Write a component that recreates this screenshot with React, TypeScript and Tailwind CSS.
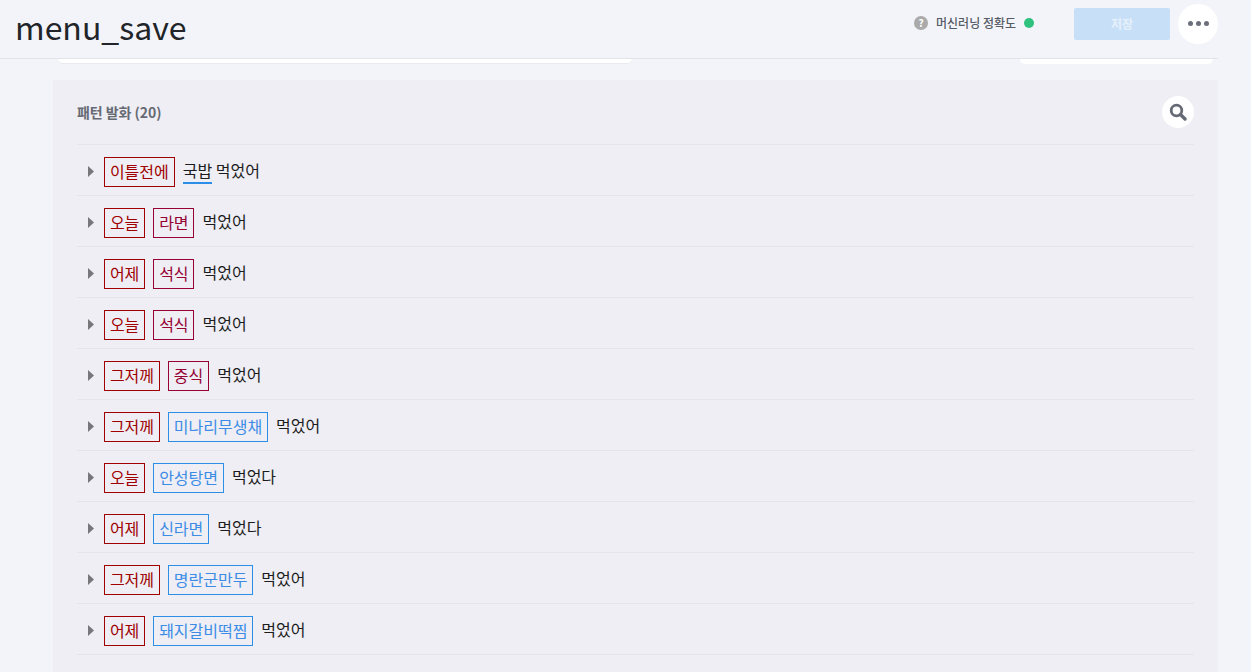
type Tag = { t: string; c: 'r' | 'p' | 'b' };
const rows: { tags: Tag[]; rest: string; plain?: string }[] = [
  { tags: [{ t: '이틀전에', c: 'r' }], rest: '먹었어', plain: '국밥' },
  { tags: [{ t: '오늘', c: 'r' }, { t: '라면', c: 'p' }], rest: '먹었어' },
  { tags: [{ t: '어제', c: 'r' }, { t: '석식', c: 'p' }], rest: '먹었어' },
  { tags: [{ t: '오늘', c: 'r' }, { t: '석식', c: 'p' }], rest: '먹었어' },
  { tags: [{ t: '그저께', c: 'r' }, { t: '중식', c: 'p' }], rest: '먹었어' },
  { tags: [{ t: '그저께', c: 'r' }, { t: '미나리무생채', c: 'b' }], rest: '먹었어' },
  { tags: [{ t: '오늘', c: 'r' }, { t: '안성탕면', c: 'b' }], rest: '먹었다' },
  { tags: [{ t: '어제', c: 'r' }, { t: '신라면', c: 'b' }], rest: '먹었다' },
  { tags: [{ t: '그저께', c: 'r' }, { t: '명란군만두', c: 'b' }], rest: '먹었어' },
  { tags: [{ t: '어제', c: 'r' }, { t: '돼지갈비떡찜', c: 'b' }], rest: '먹었어' },
];

const tagClass = {
  r: 'border-[#a00000] text-[#a00000]',
  p: 'border-[#960032] text-[#960032]',
  b: 'border-[#2b8fe8] text-[#3c8ce6]',
};

export default function App() {
  return (
    <div className="h-[672px] w-[1251px] overflow-hidden bg-[#f3f4f9]" style={{ fontFamily: "'Noto Sans CJK KR','Noto Sans',sans-serif" }}>
      <header className="flex h-[59px] w-[1218px] items-center border-b border-[#e2e3e8] pl-[15px]">
        <h1 className="mb-[7px] text-[32px] leading-[54px] text-[#212529]">menu_save</h1>
        <div className="mb-[11px] ml-auto flex items-center">
          <div className="mb-[2px] flex items-center">
            <span className="flex h-[14px] w-[14px] items-center justify-center rounded-full bg-[#aaaaaa] text-[10px] font-bold leading-none text-white">?</span>
            <span className="ml-2 text-[12px] font-medium leading-[18px] text-[#555b66]">머신러닝 정확도</span>
            <span className="ml-2 h-[10px] w-[10px] rounded-full bg-[#2ec27e]" />
          </div>
          <button className="ml-10 h-8 w-24 rounded-[2px] bg-[#c8e0f7] text-[12px] font-bold text-[#e6f0fb]">저장</button>
          <button className="ml-2 flex h-10 w-10 items-center justify-center gap-[3px] rounded-full bg-white">
            <span className="h-[5px] w-[5px] rounded-full bg-[#6b6f7b]" />
            <span className="h-[5px] w-[5px] rounded-full bg-[#6b6f7b]" />
            <span className="h-[5px] w-[5px] rounded-full bg-[#6b6f7b]" />
          </button>
        </div>
      </header>

      <div className="flex h-[5px] w-[1218px] justify-between pl-[58px] pr-[5px]">
        <div className="h-[5px] w-[574px] rounded-b-[14px] border-b border-[#e9e9ee] bg-white" />
        <div className="h-[5px] w-[193px] rounded-b-[14px] bg-white" />
      </div>

      <main className="ml-[53px] mt-4 h-[592px] w-[1165px] bg-[#eeeef4] px-6">
        <div className="flex h-16 items-center justify-between">
          <h2 className="text-[14px] font-bold leading-5 tracking-[-0.05px] text-[#666a73]">패턴 발화 (20)</h2>
          <button className="flex h-8 w-8 items-center justify-center rounded-full bg-white">
            <svg width="18" height="18" viewBox="0 0 18 18" fill="none">
              <circle cx="7.5" cy="7.5" r="5.3" stroke="#666a75" strokeWidth="2.8" />
              <path d="M11.5 11.5 L16 16" stroke="#666a75" strokeWidth="3.4" strokeLinecap="round" />
            </svg>
          </button>
        </div>
        <ul className="border-b border-[#e4e4ea]">
          {rows.map((r, i) => (
            <li key={i} className="flex h-[51px] items-center border-t border-[#e4e4ea] pl-[11px]">
              <svg className="mr-[10px] mt-[3px]" width="6" height="11" viewBox="0 0 6 11">
                <path d="M0 0 L6 5.5 L0 11 Z" fill="#77777b" />
              </svg>
              <div className="flex items-center gap-2 text-[16px] leading-[28px]">
                {r.tags.map((t, j) => (
                  <span key={j} className={`mt-[4px] h-[30px] whitespace-nowrap border px-[4.9px] leading-[26px] ${tagClass[t.c]}`}>{t.t}</span>
                ))}
                <span className="whitespace-pre text-[#1c1c1c]">
                  {r.plain && <span className="inline-block h-[26px] border-b-2 border-[#2b8fe8] leading-[24px]">{r.plain}</span>}
                  {r.plain ? ' ' : ''}
                  {r.rest}
                </span>
              </div>
            </li>
          ))}
        </ul>
      </main>
    </div>
  );
}
